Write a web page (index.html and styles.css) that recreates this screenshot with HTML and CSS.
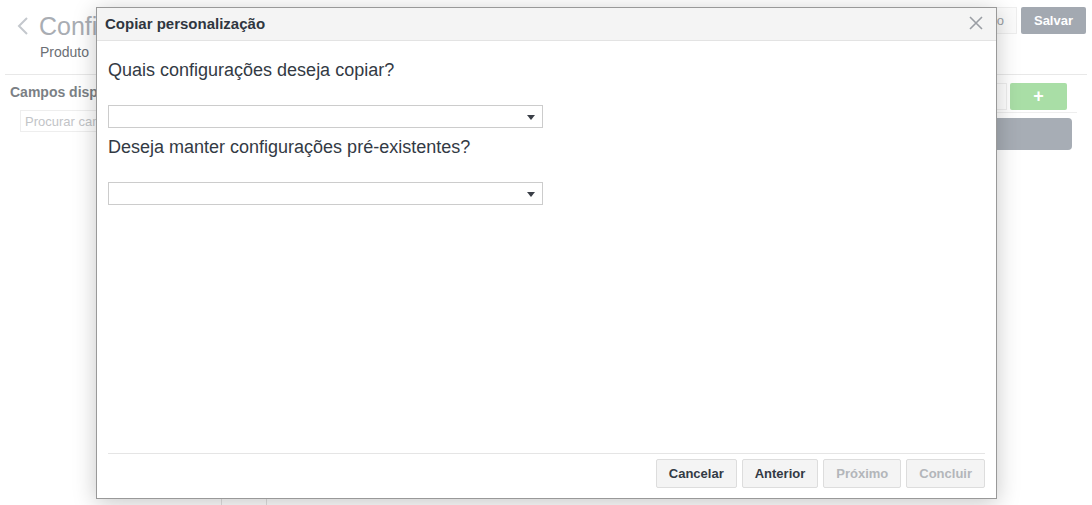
FILE: index.html
```html
<!DOCTYPE html>
<html lang="pt">
<head>
<meta charset="utf-8">
<title>Copiar personalização</title>
<link rel="stylesheet" href="styles.css">
</head>
<body>
<div class="page">
  <header class="topbar">
    <div class="title-block">
      <div class="title-row">
        <span class="back">
          <svg width="12" height="20" viewBox="0 0 12 20"><path d="M10 2 L2 10 L10 18" fill="none" stroke="#c4c8cd" stroke-width="2"/></svg>
        </span>
        <span class="page-title">Configurações</span>
      </div>
      <div class="subtitle">Produto</div>
    </div>
    <div class="actions">
      <button class="btn-light">Cancelar edição</button>
      <button class="btn-save">Salvar</button>
    </div>
  </header>
  <div class="content">
    <aside class="left">
      <div class="left-title">Campos disponíveis</div>
      <input class="search" placeholder="Procurar campos">
    </aside>
    <section class="right">
      <div class="right-toolbar">
        <div class="tool-input"></div>
        <button class="btn-add">+</button>
      </div>
      <div class="gray-bar"></div>
    </section>
  </div>
  <div class="ticks"><span></span><span></span></div>
</div>

<div class="modal">
  <div class="modal-header">
    <span class="modal-title">Copiar personalização</span>
    <span class="close">
      <svg width="16" height="16" viewBox="0 0 16 16"><path d="M2 2 L14 14 M14 2 L2 14" stroke="#9a9ea4" stroke-width="1.6" fill="none"/></svg>
    </span>
  </div>
  <div class="modal-body">
    <div class="question">Quais configurações deseja copiar?</div>
    <div class="select"><span class="caret"></span></div>
    <div class="question q2">Deseja manter configurações pré-existentes?</div>
    <div class="select"><span class="caret"></span></div>
  </div>
  <div class="modal-footer">
    <button class="mbtn">Cancelar</button>
    <button class="mbtn">Anterior</button>
    <button class="mbtn disabled">Próximo</button>
    <button class="mbtn disabled">Concluir</button>
  </div>
</div>
</body>
</html>
```

FILE: styles.css
```css
* { box-sizing: border-box; }
html, body {
  margin: 0;
  padding: 0;
  width: 1092px;
  height: 505px;
  overflow: hidden;
  background: #fff;
  font-family: "Liberation Sans", Arial, sans-serif;
}
.page {
  position: relative;
  width: 1092px;
  height: 505px;
}
.topbar {
  display: flex;
  justify-content: space-between;
  align-items: flex-start;
  margin: 0 5px;
  padding: 7px 1px 0 12px;
  height: 75px;
  border-bottom: 1px solid #e8e8e8;
}
.title-row {
  display: flex;
  align-items: center;
  gap: 10px;
  height: 36px;
  margin-top: 1px;
}
.back { display: flex; align-items: center; }
.page-title {
  font-size: 25px;
  color: #a9adb3;
}
.subtitle {
  margin-left: 23px;
  margin-top: 0;
  font-size: 14px;
  color: #6b6f75;
}
.actions {
  display: flex;
  gap: 4px;
}
.btn-light {
  height: 27px;
  padding: 0 12px;
  border: 1px solid #eee;
  background: #fbfbfb;
  color: #9a9ea4;
  font-family: inherit;
  font-size: 13px;
}
.btn-save {
  height: 27px;
  width: 65px;
  border: 0;
  border-radius: 2px;
  background: #a3a9b1;
  color: #fff;
  font-family: inherit;
  font-weight: bold;
  font-size: 13px;
}
.content {
  display: flex;
  justify-content: space-between;
}
.left {
  padding: 9px 10px;
}
.left-title {
  font-weight: bold;
  font-size: 14px;
  color: #7b7f85;
}
.search {
  margin: 10px 0 0 10px;
  width: 200px;
  height: 22px;
  border: 1px solid #eee;
  font-family: inherit;
  font-size: 13px;
  padding: 0 4px;
  color: #bbb;
}
.search::placeholder { color: #c2c4c7; }
.right {
  width: 300px;
  padding: 8px 20px 0 0;
}
.right-toolbar {
  display: flex;
  justify-content: flex-end;
  gap: 3px;
  border-bottom: 1px solid #eee;
  padding-bottom: 2px;
  margin-right: -5px;
}
.tool-input {
  flex: 1;
  height: 27px;
  border: 1px solid #eee;
}
.btn-add {
  width: 57px;
  height: 27px;
  margin-right: 10px;
  border: 0;
  border-radius: 2px;
  background: #a9dea6;
  color: #fff;
  font-weight: bold;
  font-size: 18px;
  line-height: 27px;
  padding: 0;
  font-family: inherit;
}
.gray-bar {
  margin-top: 5px;
  height: 32px;
  border-radius: 4px;
  background: #a7adb5;
}
.ticks {
  position: absolute;
  left: 221px;
  top: 498px;
  display: flex;
  gap: 44px;
}
.ticks span {
  width: 1px;
  height: 7px;
  background: #e2e2e2;
}

/* Modal */
.modal {
  position: absolute;
  left: 96px;
  top: 7px;
  width: 901px;
  height: 492px;
  background: #fff;
  border: 1px solid #999;
  box-shadow: 0 4px 22px rgba(0, 0, 0, 0.22);
  display: flex;
  flex-direction: column;
}
.modal-header {
  height: 33px;
  flex: none;
  background: #f4f4f4;
  border-bottom: 1px solid #e3e3e3;
  display: flex;
  align-items: center;
  justify-content: space-between;
  padding: 0 12px 0 8px;
}
.modal-title {
  font-weight: bold;
  font-size: 15px;
  color: #2f3640;
  margin-top: -2px;
}
.close { display: flex; margin-top: -2px; }
.modal-body {
  flex: 1;
  padding: 19px 11px 0 11px;
}
.question {
  font-size: 18px;
  color: #333a44;
  height: 21px;
  line-height: 21px;
  margin-bottom: 24px;
}
.question.q2 {
  margin-top: 9px;
  margin-bottom: 24px;
}
.select {
  position: relative;
  width: 435px;
  height: 23px;
  border: 1px solid #ccc;
  background: #fff;
}
.caret {
  position: absolute;
  right: 7px;
  top: 9px;
  width: 0;
  height: 0;
  border-left: 4px solid transparent;
  border-right: 4px solid transparent;
  border-top: 5px solid #3a3f47;
}
.modal-footer {
  flex: none;
  margin: 0 11px;
  border-top: 1px solid #e5e5e5;
  padding: 5px 0 10px;
  display: flex;
  justify-content: flex-end;
  gap: 5px;
}
.mbtn {
  height: 29px;
  padding: 0 12px;
  border: 1px solid #ddd;
  border-radius: 2px;
  background: #f4f4f4;
  color: #333a44;
  font-family: inherit;
  font-weight: bold;
  font-size: 13px;
}
.mbtn.disabled {
  color: #b3b6ba;
}
```
